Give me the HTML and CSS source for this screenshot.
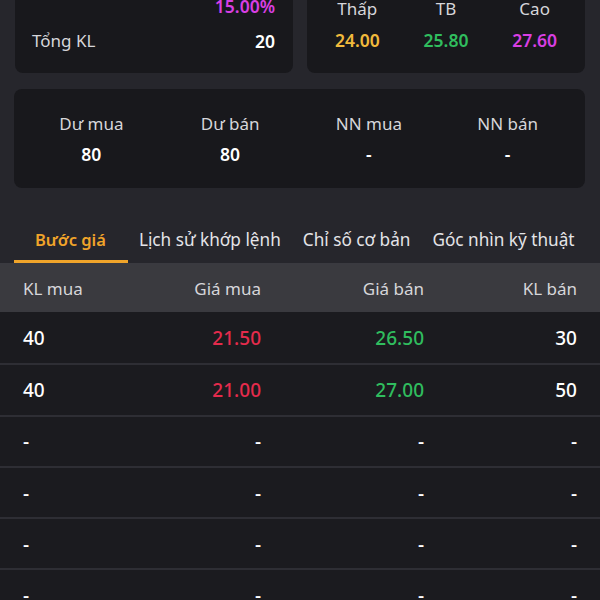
FILE: index.html
```html
<!DOCTYPE html>
<html lang="vi">
<head>
    <meta charset="UTF-8">
    <meta name="viewport" content="width=device-width, initial-scale=1.0">
    <title>Bước giá</title>
    <link rel="stylesheet" href="styles.css">
</head>
<body>
    <div class="summary">
        <div class="card card-left">
            <div class="info-row">
                <span class="label">+/-</span>
                <span class="value-stack">
                    <span class="purple">3.60</span>
                    <span class="purple">15.00%</span>
                </span>
            </div>
            <div class="info-row">
                <span class="label">Tổng KL</span>
                <span class="value">20</span>
            </div>
        </div>
        <div class="card card-right">
            <div class="stat">
                <span class="label">Thấp</span>
                <span class="value yellow">24.00</span>
            </div>
            <div class="stat">
                <span class="label">TB</span>
                <span class="value green">25.80</span>
            </div>
            <div class="stat">
                <span class="label">Cao</span>
                <span class="value purple">27.60</span>
            </div>
        </div>
    </div>

    <div class="card card-wide">
        <div class="stat">
            <span class="label">Dư mua</span>
            <span class="value">80</span>
        </div>
        <div class="stat">
            <span class="label">Dư bán</span>
            <span class="value">80</span>
        </div>
        <div class="stat">
            <span class="label">NN mua</span>
            <span class="value">-</span>
        </div>
        <div class="stat">
            <span class="label">NN bán</span>
            <span class="value">-</span>
        </div>
    </div>

    <div class="tabs">
        <div class="tab active">Bước giá</div>
        <div class="tab">Lịch sử khớp lệnh</div>
        <div class="tab">Chỉ số cơ bản</div>
        <div class="tab">Góc nhìn kỹ thuật</div>
    </div>

    <div class="table">
        <div class="table-head">
            <span>KL mua</span>
            <span>Giá mua</span>
            <span>Giá bán</span>
            <span>KL bán</span>
        </div>
        <div class="table-row">
            <span>40</span>
            <span class="red">21.50</span>
            <span class="green">26.50</span>
            <span>30</span>
        </div>
        <div class="table-row">
            <span>40</span>
            <span class="red">21.00</span>
            <span class="green">27.00</span>
            <span>50</span>
        </div>
        <div class="table-row">
            <span>-</span><span>-</span><span>-</span><span>-</span>
        </div>
        <div class="table-row">
            <span>-</span><span>-</span><span>-</span><span>-</span>
        </div>
        <div class="table-row">
            <span>-</span><span>-</span><span>-</span><span>-</span>
        </div>
        <div class="table-row">
            <span>-</span><span>-</span><span>-</span><span>-</span>
        </div>
    </div>
</body>
</html>
```

FILE: styles.css
```css
* {
    box-sizing: border-box;
}
body {
    margin: 0;
    background-color: #26262c;
    font-family: "Noto Sans", "Open Sans", sans-serif;
    color: #fff;
    overflow: hidden;
}
.card {
    background-color: #18181c;
    border-radius: 8px;
}
.label {
    color: #d6d6da;
    font-size: 17px;
    line-height: 24px;
}
.value {
    font-size: 17.5px;
    font-weight: 600;
    line-height: 24px;
}
.purple { color: #d93fe3; }
.yellow { color: #f1ba3c; }
.green { color: #30bd5e; }
.red { color: #e52b4c; }

/* top two cards, scrolled partly off screen */
.summary {
    display: grid;
    grid-template-columns: 1fr 1fr;
    gap: 14px;
    padding: 0 15px;
    margin-top: -40px;
}
.card-left {
    padding: 10px 18px 20px 17px;
    display: flex;
    flex-direction: column;
    gap: 11px;
}
.info-row {
    display: flex;
    justify-content: space-between;
    align-items: flex-start;
}
.value-stack {
    display: flex;
    flex-direction: column;
    align-items: flex-end;
    font-size: 17.5px;
    font-weight: 600;
    line-height: 24px;
}
.card-right {
    padding: 10px 6px 21px;
    display: grid;
    grid-template-columns: repeat(3, 1fr);
    align-items: end;
}
.stat {
    display: flex;
    flex-direction: column;
    align-items: center;
    gap: 7px;
}

.card-wide {
    margin: 16px 15px 0 14px;
    padding: 23px 8px 22px;
    display: grid;
    grid-template-columns: repeat(4, 1fr);
}
.card-wide .stat {
    gap: 6px;
}

/* tabs */
.tabs {
    display: flex;
    margin-top: 23px;
    padding-left: 14px;
    border-bottom: 2px solid #3a3a40;
}
.tab {
    padding: 17px 11px 8px;
    font-size: 17.2px;
    line-height: 24px;
    color: #e4e4e8;
    border-bottom: 3px solid transparent;
    white-space: nowrap;
}
.tab.active {
    padding-left: 21px;
    padding-right: 22px;
    font-size: 16.5px;
    color: #f0a42a;
    font-weight: 600;
    border-bottom-color: #f0a42a;
}

/* order book */
.table-head,
.table-row {
    display: grid;
    grid-template-columns: 100px 138px 163px 153px;
    padding: 0 23px;
    align-items: center;
}
.table-head span:not(:first-child),
.table-row span:not(:first-child) {
    text-align: right;
}
.table-head {
    height: 47px;
    background-color: #3a3a3f;
    color: #d6d6da;
    font-size: 17px;
}
.table-row {
    height: 51.3px;
    background-color: #1b1b1f;
    font-size: 19px;
    font-weight: 500;
}
.table-row + .table-row {
    border-top: 2px solid #2e2e34;
}
```
